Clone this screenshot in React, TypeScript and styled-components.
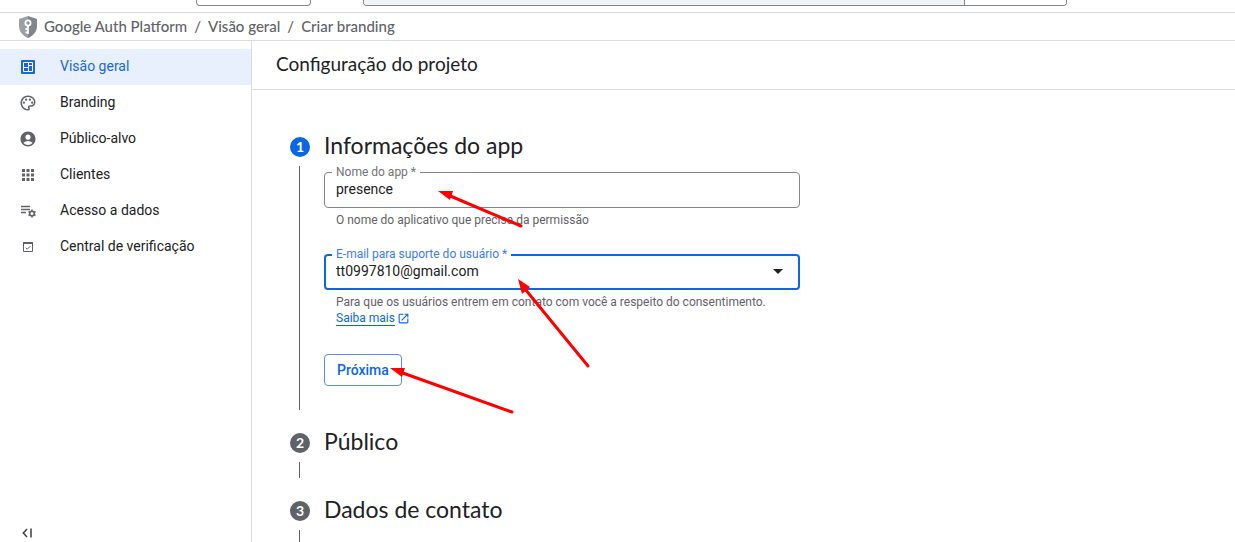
import React from "react";
import styled, { createGlobalStyle, css } from "styled-components";
import { MdAccountCircle, MdApps, MdArrowDropDown, MdOpenInNew, MdOutlinePalette } from "react-icons/md";

const display = `Lato, "Open Sans", sans-serif`;
const body = `Roboto, "Liberation Sans", sans-serif`;

const GlobalStyle = createGlobalStyle`
  *, *::before, *::after { box-sizing: border-box; }
  body { margin: 0; background: #fff; color: #202124; font: 14px/20px ${body}; }
  h1, h2, p, ol, ul { margin: 0; padding: 0; font-weight: 400; }
  ol, ul { list-style: none; }
  button, input, select { font: inherit; color: inherit; }
`;

const Page = styled.div`
  position: relative;
  display: flex;
  flex-direction: column;
  height: 100vh;
  overflow: hidden;
`;

const TopBar = styled.header`
  display: flex;
  flex: none;
  gap: 52px;
  height: 13px;
  padding: 0 168px 6px 196px;
  border-bottom: 1px solid #dadce0;
`;

const ProjectPicker = styled.button`
  width: 115px;
  padding: 0;
  background: #fff;
  border: 1px solid #80868b;
  border-top: 0;
  border-radius: 0 0 4px 4px;
`;

const SearchBar = styled.div`
  display: flex;
  flex: 1;
  overflow: hidden;
  border: 1px solid #80868b;
  border-top: 0;
  border-radius: 0 0 4px 4px;
`;

const SearchInput = styled.input`
  flex: 1;
  min-width: 0;
  height: 100%;
  padding: 0;
  border: 0;
  background: #f1f3f4;
`;

const SearchButton = styled.button`
  width: 102px;
  padding: 0;
  background: #fff;
  border: 0;
  border-left: 1px solid #80868b;
`;

const Breadcrumbs = styled.nav`
  display: flex;
  flex: none;
  align-items: center;
  gap: 7px;
  height: 28px;
  padding-left: 19px;
  border-bottom: 1px solid #dadce0;
  color: #5f6368;
  font: 500 15px/20px ${display};
`;

const Crumb = styled.a`
  padding-bottom: 2px;
  color: inherit;
  text-decoration: none;
`;

const Separator = styled.span`
  padding-bottom: 2px;
`;

const Columns = styled.div`
  display: flex;
  flex: 1;
  min-height: 0;
`;

const Sidebar = styled.nav`
  display: flex;
  flex: none;
  flex-direction: column;
  justify-content: space-between;
  width: 252px;
  padding-top: 8px;
  border-right: 1px solid #dadce0;
`;

const NavLink = styled.a<{ $active?: boolean }>`
  display: flex;
  align-items: center;
  gap: 23px;
  height: 36px;
  padding-left: 19px;
  color: #202124;
  text-decoration: none;
  svg { color: #5f6368; flex: none; }
  ${(p) => p.$active && css`
    background: #e8f0fe;
    color: #1967d2;
    svg { color: #1967d2; }
  `}
`;

const NavLabel = styled.span`
  padding-bottom: 2px;
`;

const CollapseButton = styled.button`
  display: flex;
  align-self: flex-start;
  margin-left: 19px;
  padding: 0;
  background: none;
  border: 0;
  color: #3c4043;
`;

const Main = styled.main`
  display: flex;
  flex: 1;
  flex-direction: column;
  min-width: 0;
`;

const PageTitle = styled.h1`
  flex: none;
  padding: 11px 24px 13px;
  border-bottom: 1px solid #dadce0;
  font: 400 19px/24px ${display};
`;

const Stepper = styled.ol`
  display: flex;
  flex: 1;
  flex-direction: column;
  min-height: 0;
  padding: 24px 38px 0;
`;

const Step = styled.li<{ $fill?: boolean }>`
  display: flex;
  flex: ${(p) => (p.$fill ? "1" : "none")};
  flex-direction: column;
`;

const StepHeader = styled.div`
  display: flex;
  align-items: center;
  gap: 14px;
  height: 52px;
  padding-top: 14px;
`;

const StepNumber = styled.span<{ $active?: boolean }>`
  width: 20px;
  height: 20px;
  border-radius: 50%;
  background: ${(p) => (p.$active ? "#0b66e4" : "#5f6368")};
  color: #fff;
  font: 700 14px/20px ${display};
  text-align: center;
`;

const StepTitle = styled.h2`
  padding-bottom: 4px;
  font: 400 23px/28px ${display};
`;

const StepBody = styled.div`
  flex: 1;
  min-height: 16px;
  margin-left: 9px;
  border-left: 1px solid #5f6368;
`;

const Form = styled.form`
  display: flex;
  flex-direction: column;
  align-items: flex-start;
  padding: 6px 0 24px 24px;
`;

const Field = styled.div`
  position: relative;
  width: 100%;
  max-width: 476px;
  margin-bottom: 26px;
`;

const FieldLabel = styled.label<{ $focused?: boolean }>`
  position: absolute;
  top: -8px;
  left: 8px;
  padding: 0 4px;
  background: #fff;
  color: ${(p) => (p.$focused ? "#3b7de8" : "#6f7479")};
  font-size: 12px;
  line-height: 16px;
`;

const control = css`
  display: block;
  width: 100%;
  height: 36px;
  outline: 0;
  background: #fff;
  border-radius: 4px;
`;

const TextInput = styled.input`
  ${control}
  padding: 0 11px 2px;
  border: 1px solid #80868b;
`;

const Select = styled.select`
  ${control}
  padding: 0 32px 2px 10px;
  border: 2px solid #0b66e4;
  appearance: none;
`;

const SelectArrow = styled(MdArrowDropDown)`
  position: absolute;
  top: 5px;
  right: 10px;
  pointer-events: none;
`;

const Hint = styled.p`
  padding: 4px 12px 0;
  color: #5f6368;
  font-size: 12px;
  line-height: 16px;
`;

const LearnMore = styled.a`
  display: flex;
  align-items: center;
  gap: 2px;
  width: max-content;
  color: #0b66e4;
  text-decoration: none;
  span { height: 16px; border-bottom: 1px solid currentColor; }
`;

const NextButton = styled.button`
  height: 32px;
  margin-top: 2px;
  padding: 0 12px;
  background: #fff;
  border: 1px solid #5a8ede;
  border-radius: 4px;
  color: #0b66e4;
  font-weight: 500;
`;

const Annotations = styled.svg`
  position: absolute;
  top: 0;
  left: 0;
  pointer-events: none;
`;

const ShieldIcon = () => (
  <svg width="18" height="22" viewBox="0 0 18 22" aria-hidden="true">
    <path d="M9 0 0 3v7c0 5.500 3.800 10 9 12V0Z" fill="#9aa0a6" />
    <path d="m9 0 9 3v7c0 5.500-3.800 10-9 12V0Z" fill="#80868b" />
    <circle cx="9" cy="7" r="2.600" fill="none" stroke="#fff" strokeWidth="1.800" />
    <path d="M9 9.500V18M9 13H6.500M9 16.300H6.500" fill="none" stroke="#fff" strokeWidth="1.800" />
  </svg>
);

const DashboardIcon = () => (
  <svg width="18" height="18" viewBox="0 0 18 18" aria-hidden="true">
    <rect x="2" y="2" width="14" height="14" rx="1" fill="currentColor" />
    <path d="M4.500 4.500h9v9h-9zM9.500 4.500v9M4.500 9.500h5M9.500 7.500h4" fill="none" stroke="#fff" />
  </svg>
);

const ListGearIcon = () => (
  <svg width="18" height="18" viewBox="0 0 18 18" aria-hidden="true">
    <path d="M2 4.500h9M2 7.500h9M2 10.500h5" stroke="currentColor" strokeWidth="1.400" fill="none" />
    <circle cx="13" cy="11.500" r="2.300" fill="none" stroke="currentColor" strokeWidth="1.600" />
    <path
      d="M13 7.500v1.500M13 14v1.500M9.500 9.500l1.300.8M15.200 12.700l1.300.8M9.500 13.500l1.300-.8M15.200 10.300l1.300-.8"
      stroke="currentColor"
      strokeWidth="1.600"
    />
  </svg>
);

const VerifiedIcon = () => (
  <svg width="18" height="18" viewBox="0 0 18 18" aria-hidden="true">
    <path d="M4.500 5h9v8.500h-9z" fill="none" stroke="currentColor" />
    <path d="M4 4h10v2H4z" fill="currentColor" />
    <path d="m6.700 9.700 1.500 1.500 3-3" fill="none" stroke="currentColor" />
  </svg>
);

const CollapseIcon = () => (
  <svg width="18" height="18" viewBox="0 0 18 18" aria-hidden="true">
    <path d="M8 5 4.300 9 8 13M12 4.500v9" fill="none" stroke="currentColor" strokeWidth="1.500" />
  </svg>
);

const navItems = [
  { label: "Visão geral", icon: <DashboardIcon />, active: true },
  { label: "Branding", icon: <MdOutlinePalette size={18} /> },
  { label: "Público-alvo", icon: <MdAccountCircle size={18} /> },
  { label: "Clientes", icon: <MdApps size={18} /> },
  { label: "Acesso a dados", icon: <ListGearIcon /> },
  { label: "Central de verificação", icon: <VerifiedIcon /> },
];

const arrows = [
  { line: "M448 195 521 226", head: "438,191 453,191 450,200" },
  { line: "M525 289 588 366", head: "518,279 530,287 522,294" },
  { line: "M400 372 512 412", head: "390,368 405,368 402,377" },
];

export default function App() {
  return (
    <Page>
      <GlobalStyle />
      <TopBar>
        <ProjectPicker type="button" aria-label="Selecionar projeto" />
        <SearchBar>
          <SearchInput aria-label="Pesquisar" />
          <SearchButton type="button" aria-label="Pesquisar" />
        </SearchBar>
      </TopBar>
      <Breadcrumbs aria-label="Navegação estrutural">
        <ShieldIcon />
        <Crumb href="#plataforma">Google Auth Platform</Crumb>
        <Separator>/</Separator>
        <Crumb href="#visao-geral">Visão geral</Crumb>
        <Separator>/</Separator>
        <Crumb href="#criar">Criar branding</Crumb>
      </Breadcrumbs>
      <Columns>
        <Sidebar>
          <ul>
            {navItems.map((item) => (
              <li key={item.label}>
                <NavLink href="#" $active={item.active}>
                  {item.icon}
                  <NavLabel>{item.label}</NavLabel>
                </NavLink>
              </li>
            ))}
          </ul>
          <CollapseButton type="button" aria-label="Recolher menu">
            <CollapseIcon />
          </CollapseButton>
        </Sidebar>
        <Main>
          <PageTitle>Configuração do projeto</PageTitle>
          <Stepper>
            <Step>
              <StepHeader>
                <StepNumber $active>1</StepNumber>
                <StepTitle>Informações do app</StepTitle>
              </StepHeader>
              <StepBody>
                <Form onSubmit={(e) => e.preventDefault()}>
                  <Field>
                    <TextInput id="app-name" defaultValue="presence" />
                    <FieldLabel htmlFor="app-name">Nome do app *</FieldLabel>
                    <Hint>O nome do aplicativo que precisa da permissão</Hint>
                  </Field>
                  <Field>
                    <Select id="support-email">
                      <option>tt0997810@gmail.com</option>
                    </Select>
                    <SelectArrow size={24} />
                    <FieldLabel htmlFor="support-email" $focused>
                      E-mail para suporte do usuário *
                    </FieldLabel>
                    <Hint>
                      Para que os usuários entrem em contato com você a respeito do consentimento.
                      <LearnMore href="#saiba-mais">
                        <span>Saiba mais</span>
                        <MdOpenInNew size={13} />
                      </LearnMore>
                    </Hint>
                  </Field>
                  <NextButton type="submit">Próxima</NextButton>
                </Form>
              </StepBody>
            </Step>
            <Step>
              <StepHeader>
                <StepNumber>2</StepNumber>
                <StepTitle>Público</StepTitle>
              </StepHeader>
              <StepBody />
            </Step>
            <Step $fill>
              <StepHeader>
                <StepNumber>3</StepNumber>
                <StepTitle>Dados de contato</StepTitle>
              </StepHeader>
              <StepBody />
            </Step>
          </Stepper>
        </Main>
      </Columns>
      <Annotations width="640" height="440" viewBox="0 0 640 440" aria-hidden="true">
        {arrows.map((arrow) => (
          <g key={arrow.line}>
            <path d={arrow.line} stroke="#f00" strokeWidth="3" strokeLinecap="round" />
            <polygon points={arrow.head} fill="#f00" />
          </g>
        ))}
      </Annotations>
    </Page>
  );
}
